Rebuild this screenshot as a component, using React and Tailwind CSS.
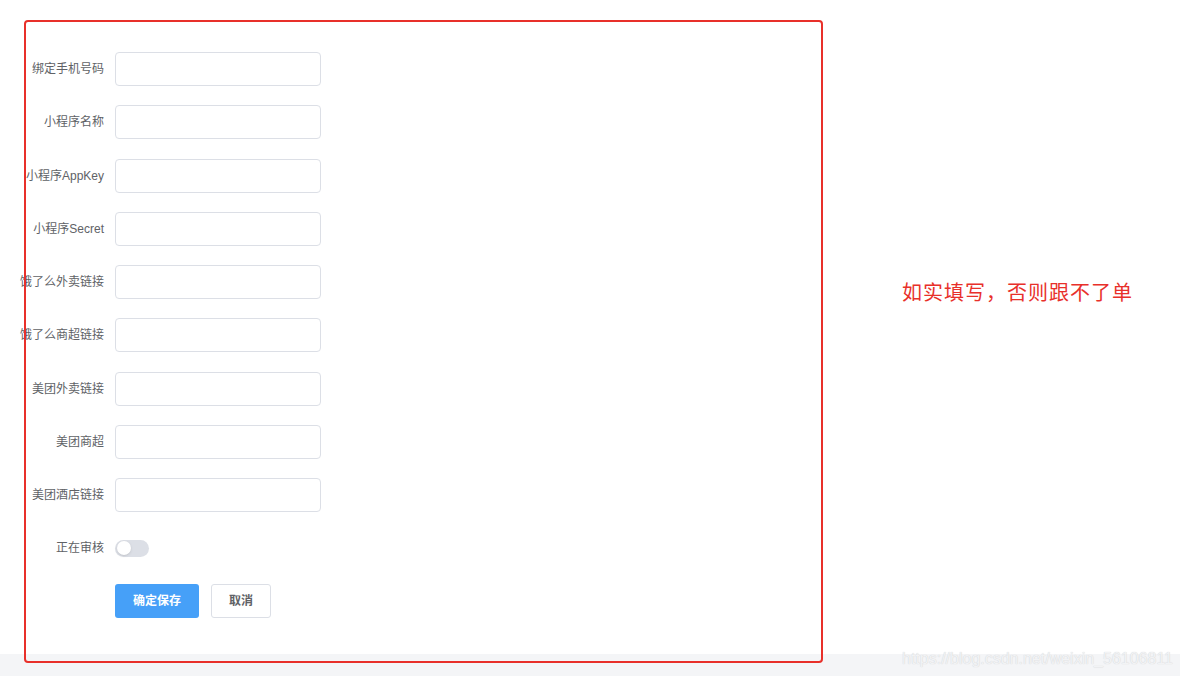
import { useState } from 'react'

const fields = [
  '绑定手机号码',
  '小程序名称',
  '小程序AppKey',
  '小程序Secret',
  '饿了么外卖链接',
  '饿了么商超链接',
  '美团外卖链接',
  '美团商超',
  '美团酒店链接',
]

function Row({ label, children }) {
  return (
    <div className="flex items-center h-[34px] mb-[19.25px]">
      <label className="w-[115px] shrink-0 pr-[11px] text-right whitespace-nowrap text-[12px] text-[#606266] flex justify-end">
        {label}
      </label>
      {children}
    </div>
  )
}

export default function App() {
  const [on, setOn] = useState(false)

  return (
    <div
      className="relative w-[1180px] h-[676px] bg-white flex flex-col overflow-hidden"
      style={{ fontFamily: '"Liberation Sans", "Noto Sans CJK SC", sans-serif' }}
    >
      <div className="flex-1 flex">
        {/* 表单 */}
        <div className="pt-[52px] w-[822px]">
          {fields.map((f) => (
            <Row key={f} label={f}>
              <input className="w-[206px] h-[34px] border border-[#dcdfe6] rounded-[4px] outline-none px-3 text-[12px]" />
            </Row>
          ))}
          <div className="flex items-center h-[34px] mt-[1px]">
            <label className="w-[115px] shrink-0 pr-[11px] text-right text-[12px] text-[#606266]">正在审核</label>
            <button
              onClick={() => setOn(!on)}
              className={`relative w-[34px] h-[17px] rounded-full ${on ? 'bg-[#409eff]' : 'bg-[#dcdfe6]'}`}
            >
              <span
                className={`absolute top-[1.5px] w-[14px] h-[14px] rounded-full bg-white shadow-sm ${on ? 'left-[18.5px]' : 'left-[1.5px]'}`}
              ></span>
            </button>
          </div>
          <div className="flex gap-[12px] pl-[115px] mt-[19px]">
            <button className="w-[84px] h-[34px] rounded-[3px] bg-[#46a0f8] text-white text-[12px] font-bold">
              确定保存
            </button>
            <button className="w-[60px] h-[34px] rounded-[3px] border border-[#dcdfe6] bg-white text-[#606266] text-[12px] font-bold">
              取消
            </button>
          </div>
        </div>

        {/* 提示 */}
        <div className="flex-1 pl-[80px] pt-[279px]">
          <p className="text-[20px] leading-[28px] text-[#e8302a] tracking-[1px]">如实填写，否则跟不了单</p>
        </div>
      </div>

      <div className="h-[22px] bg-[#f4f5f7]"></div>

      {/* 标注框 */}
      <div className="absolute left-[24px] top-[20px] w-[799px] h-[643px] border-2 border-[#e8302a] rounded-[4px] pointer-events-none"></div>

      {/* 水印 */}
      <div
        className="absolute left-[902px] top-[649px] text-[16px] leading-[20px] text-[#f2f3f5] whitespace-nowrap pointer-events-none"
        style={{ textShadow: '0 0 1px #c8c9cc' }}
      >
        https://blog.csdn.net/weixin_56106811
      </div>
    </div>
  )
}
